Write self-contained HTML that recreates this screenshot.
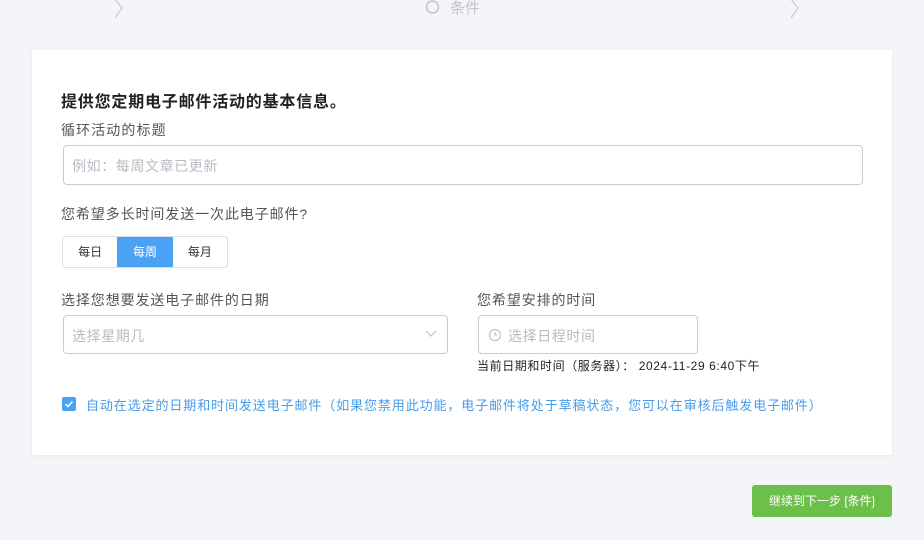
<!DOCTYPE html>
<html><head><meta charset="utf-8"><style>
*{box-sizing:border-box;margin:0;padding:0}
body{width:924px;height:540px;background:#f4f5f9;font-family:"Liberation Sans","Noto Sans CJK SC",sans-serif;position:relative;overflow:hidden;color:#303133}
.a{position:absolute;white-space:nowrap}
.card{position:absolute;left:32px;top:50px;width:860px;height:405px;background:#fff;box-shadow:0 1px 4px rgba(0,0,0,.06)}
.inp{position:absolute;border:1px solid #c8cbd1;border-radius:4px;background:#fff;font-size:14px;color:#b8bbc2;letter-spacing:.6px}
.ls{letter-spacing:.9px}
</style></head><body>
<svg class="a" style="left:112px;top:0" width="14" height="20"><path d="M2 -2 L10 8 L3 18" fill="none" stroke="#c8cbd0" stroke-width="1.2"/></svg>
<svg class="a" style="left:788px;top:0" width="14" height="20"><path d="M2 -2 L10 8 L3 18" fill="none" stroke="#c8cbd0" stroke-width="1.2"/></svg>
<svg class="a" style="left:425px;top:0" width="16" height="16"><circle cx="7.5" cy="7" r="6" fill="none" stroke="#c0c3c8" stroke-width="1.5"/></svg>
<div class="a" style="left:450px;top:-3px;font-size:15px;color:#c0c3c8">条件</div>
<div class="card">
<div class="a" style="left:29px;top:38px;font-size:16px;font-weight:bold;color:#222;letter-spacing:.8px">提供您定期电子邮件活动的基本信息。</div>
<div class="a ls" style="left:29px;top:70px;font-size:14px;color:#555;letter-spacing:1.1px">循环活动的标题</div>
<div class="inp" style="left:31px;top:95px;width:800px;height:40px;padding:10px 8px">例如：每周文章已更新</div>
<div class="a ls" style="left:29px;top:154px;font-size:14px;color:#555">您希望多长时间发送一次此电子邮件?</div>
<div class="a" style="left:30px;top:186px;width:166px;height:32px;border:1px solid #dcdfe6;border-radius:3px;font-size:12px;color:#333;display:flex;overflow:hidden">
<div style="width:55px;line-height:30px;text-align:center">每日</div>
<div style="width:56px;line-height:30px;text-align:center;background:#4aa2f5;color:#fff">每周</div>
<div style="width:55px;line-height:30px;text-align:center">每月</div></div>
<div class="a ls" style="left:29px;top:240px;font-size:14px;color:#555">选择您想要发送电子邮件的日期</div>
<div class="inp" style="left:31px;top:265px;width:385px;height:39px;padding:10px 8px">选择星期几
<svg style="position:absolute;right:10px;top:14px" width="12" height="8"><path d="M1 1 L6 6 L11 1" fill="none" stroke="#c0c3c8" stroke-width="1.2"/></svg></div>
<div class="a ls" style="left:445px;top:240px;font-size:14px;color:#555">您希望安排的时间</div>
<div class="inp" style="left:446px;top:265px;width:220px;height:39px;padding:10px 8px 10px 29px">选择日程时间
<svg style="position:absolute;left:9px;top:12px" width="14" height="14"><circle cx="7" cy="7" r="5.5" fill="none" stroke="#c0c3c8" stroke-width="1.2"/><path d="M7 4 V7 H9.5" fill="none" stroke="#c0c3c8" stroke-width="1.2"/></svg></div>
<div class="a" style="left:445px;top:307px;font-size:12px;color:#222;letter-spacing:.6px">当前日期和时间（服务器）： 2024-11-29 6:40下午</div>
<div class="a" style="left:30px;top:347px;width:14px;height:14px;background:#4aa2f5;border-radius:2px"><svg width="14" height="14"><path d="M3.5 7 L6 9.5 L10.5 4.5" fill="none" stroke="#fff" stroke-width="1.5"/></svg></div>
<div class="a" style="left:54px;top:345px;font-size:13px;color:#4a9be8;letter-spacing:.9px">自动在选定的日期和时间发送电子邮件（如果您禁用此功能，电子邮件将处于草稿状态，您可以在审核后触发电子邮件）</div>
</div>
<div class="a" style="left:752px;top:485px;width:140px;height:32px;background:#6cc04a;border-radius:3px;color:#fff;font-size:12px;line-height:32px;text-align:center">继续到下一步 [条件]</div>
</body></html>
